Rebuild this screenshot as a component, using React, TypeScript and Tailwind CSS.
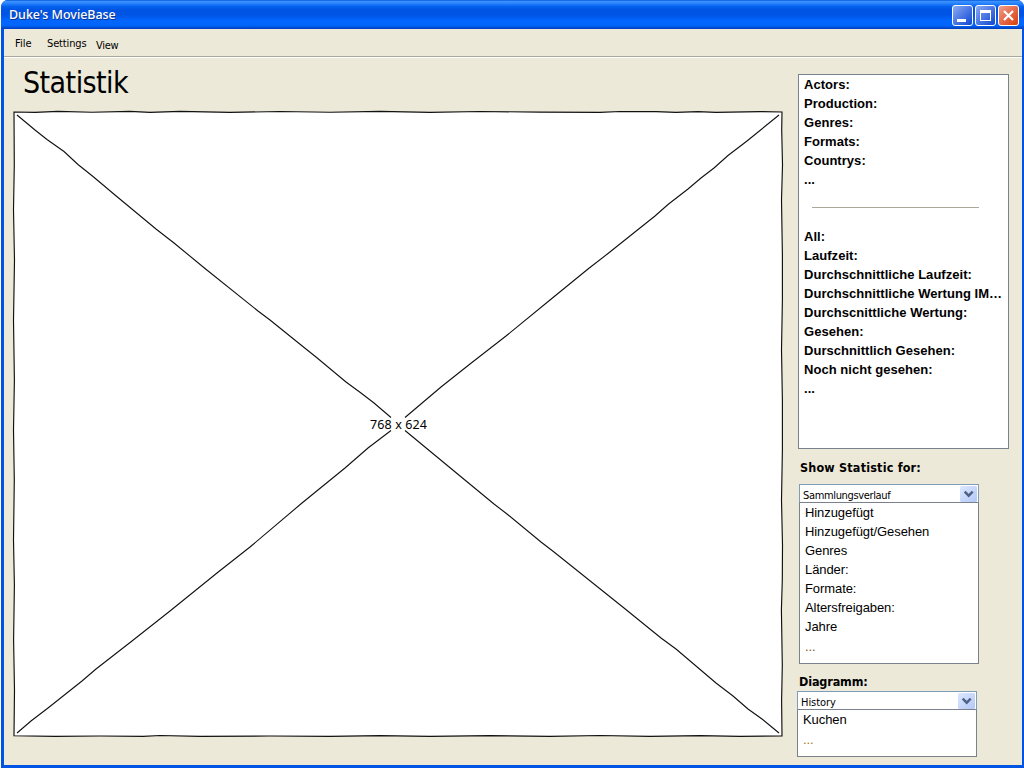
import React from "react";

const facts = [
  "Actors:",
  "Production:",
  "Genres:",
  "Formats:",
  "Countrys:",
  "...",
];

const totals = [
  "All:",
  "Laufzeit:",
  "Durchschnittliche Laufzeit:",
  "Durchschnittliche Wertung IM…",
  "Durchscnittliche Wertung:",
  "Gesehen:",
  "Durschnittlich Gesehen:",
  "Noch nicht gesehen:",
  "...",
];

const statistics = [
  "Hinzugefügt",
  "Hinzugefügt/Gesehen",
  "Genres",
  "Länder:",
  "Formate:",
  "Altersfreigaben:",
  "Jahre",
  "...",
];

const diagrams = ["Kuchen", "..."];

function WindowButton({ kind }: { kind: "min" | "max" | "close" }) {
  const close = kind === "close";
  return (
    <svg width="21" height="21" viewBox="0 0 21 21">
      <defs>
        <linearGradient id={`wb-${kind}`} x1="0" y1="0" x2="1" y2="1">
          <stop offset="0" stopColor={close ? "#f0a48c" : "#8eaef6"} />
          <stop offset="0.5" stopColor={close ? "#e5694a" : "#4c78e4"} />
          <stop offset="1" stopColor={close ? "#d93c08" : "#0b43cf"} />
        </linearGradient>
      </defs>
      <rect x="0.5" y="0.5" width="20" height="20" rx="2.5" fill={`url(#wb-${kind})`} stroke="#fff" />
      {kind === "min" && <rect x="5" y="14" width="9" height="3" fill="#fff" />}
      {kind === "max" && <path d="M5 5h11v11H5zM6 8v7h9V8z" fill="#fff" fillRule="evenodd" />}
      {close && <path d="M6 6l9 9M15 6l-9 9" stroke="#fff" strokeWidth="2.2" />}
    </svg>
  );
}

function Combo({ value, spacing }: { value: string; spacing: string }) {
  return (
    <div className="flex h-[19px] w-[180px] items-start justify-between border border-[#7f9db9] border-b-[#7a808c] bg-white pl-[3px] pr-px pt-px">
      <span className={`mt-[3px] whitespace-nowrap font-['DejaVu_Sans_Condensed','DejaVu_Sans',sans-serif] text-[11px] leading-[14px] font-stretch-condensed ${spacing}`}>
        {value}
      </span>
      <svg width="17" height="16" viewBox="0 0 17 16">
        <defs>
          <linearGradient id="combo-face" x1="0" y1="0" x2="1" y2="1">
            <stop offset="0" stopColor="#dde7fe" />
            <stop offset="1" stopColor="#b3c8f7" />
          </linearGradient>
        </defs>
        <rect width="17" height="16" rx="1.5" fill="url(#combo-face)" />
        <path d="M4.7 5.7l4 4 4-4" fill="none" stroke="#4d6185" strokeWidth="2.4" />
      </svg>
    </div>
  );
}

function Placeholder() {
  return (
    <svg className="block" width="772" height="628" viewBox="12 110 772 628">
      <path
        d="M14 112 L35 112.4 L58 111.4 L92 112.2 L130 111.4 L150 112.4 L180 111.4 L230 112.4 L280 111.5 L330 112.2 L380 111.4 L430 112.3 L480 111.5 L540 112.1 L600 112.3 L620 111.5 L656 111.6 L676 112.4 L698 111.6 L716 112.4 L760 111.6 L782 112 L781.7 130 L782.5 165 L781.5 200 L782.4 255 L782.4 300 L781.5 350 L782.4 400 L782.4 450 L781.5 500 L782.5 545 L782.3 580 L781.4 610 L782.3 665 L781.6 700 L782 736 L740 736.4 L700 735.6 L650 736.4 L600 735.5 L550 736.4 L490 735.6 L430 736.4 L380 735.6 L330 736.4 L270 736 L200 736.3 L160 735.5 L143 736.4 L100 736 L55 736.4 L14 735.7 L14.5 690 L13.6 640 L14.4 585 L13.5 540 L14.3 480 L13.5 430 L14.4 380 L13.5 320 L14.5 260 L13.5 210 L14.3 165 Z"
        fill="#fff"
        stroke="#111"
        strokeWidth="1.15"
      />
      <g fill="none" stroke="#111" strokeWidth="1.1">
        <path d="M17 115 L35 130 L47 139.5 L64 151.5 L78 164.5 L93 176.5 L115 195 L156 229 L174 243 L205 268.5 L258 311 L270 320 L301 345 L316 357 L346 382 L361 393 L374 403 L391 417.5" />
        <path d="M779 115 L747 141 L728 155.5 L714 168 L701 178 L688 189 L668 204.5 L655 216 L608 253.5 L588 269 L550 300 L506 336 L470 364 L441 387 L405 417.5" />
        <path d="M17 733 L31 721 L48 708 L82 681 L96 669 L132 641 L170 611 L217 573 L250 547 L302 503 L345 468 L368 448 L391 430.5" />
        <path d="M779 733 L762 719 L748 709 L733 696 L716 683 L676 649 L661 638 L624 608 L604 592 L554 552 L541 542 L507 514 L494 504 L454 471 L431 452 L405 430.5" />
      </g>
      <text x="370" y="429" textLength="57" fontSize="12.5" fontFamily="'Noto Sans',sans-serif">
        768 x 624
      </text>
    </svg>
  );
}

export default function App() {
  return (
    <div className="h-[768px] w-[1024px] overflow-hidden bg-white pl-px text-black">
      <div className="flex h-full flex-col overflow-hidden rounded-t-[7px] bg-[#0054e3]">
        <header className="flex h-[29px] shrink-0 items-start justify-between bg-[linear-gradient(180deg,#0655d8_0%,#3a93ff_5%,#2580fb_13%,#0360ee_23%,#0054e2_34%,#0055e6_52%,#0266ff_72%,#0265fa_88%,#0045cc_97%,#003cb8_100%)] pl-2 pr-[5px]">
          <span className="mt-[6px] whitespace-nowrap font-['Noto_Sans',sans-serif] text-[12.5px] font-medium leading-[17px] tracking-[-0.05px] text-white [text-shadow:1px_1px_0_#10368f]">
            Duke's MovieBase
          </span>
          <div className="mt-[5px] flex gap-[2px]">
            <WindowButton kind="min" />
            <WindowButton kind="max" />
            <WindowButton kind="close" />
          </div>
        </header>

        <div className="mb-[3px] ml-[3px] mr-[2px] flex min-h-0 flex-1 flex-col bg-[#ece9d8]">
          <nav className="flex h-[28px] shrink-0 items-start border-b border-[#aca899] pl-[11px] font-['DejaVu_Sans_Condensed','DejaVu_Sans',sans-serif] text-[11px] leading-[14px] font-stretch-condensed">
            <span className="mt-[8px] w-8 tracking-[0.05px]">File</span>
            <span className="mt-[8px] w-[49px] tracking-[-0.15px]">Settings</span>
            <span className="mt-[10px] tracking-[-0.3px]">View</span>
          </nav>
          <div className="h-px shrink-0 bg-white" />

          <div className="flex min-h-0 flex-1">
            <main className="w-[793px] shrink-0 pl-2">
              <h1 className="h-[52px] pl-[11px] pt-[6px] font-['DejaVu_Sans_Condensed','DejaVu_Sans',sans-serif] text-[30px] leading-[37px] tracking-[-0.55px] font-stretch-condensed">
                Statistik
              </h1>
              <Placeholder />
            </main>

            <aside className="flex flex-col pt-4">
              <section className="ml-px h-[375px] w-[211px] border border-[#7a808c] bg-white pl-[5px] font-['Liberation_Sans',Arial,sans-serif] text-[13px] font-bold leading-[19px] tracking-[0.04px]">
                {facts.map((t) => (
                  <p key={t} className="whitespace-nowrap">{t}</p>
                ))}
                <div className="flex h-[38px] items-start pl-2 pt-[18px]">
                  <div className="h-px w-[167px] bg-[#aca899]" />
                </div>
                {totals.map((t) => (
                  <p key={t} className="whitespace-nowrap">{t}</p>
                ))}
              </section>

              <h2 className="ml-[3px] mt-[10px] h-[25px] font-['DejaVu_Sans_Condensed','DejaVu_Sans',sans-serif] text-[12.5px] font-bold leading-[18px] tracking-[0.18px] font-stretch-condensed">
                Show Statistic for:
              </h2>
              <div className="ml-[2px]">
                <Combo value="Sammlungsverlauf" spacing="tracking-[-0.35px]" />
                <ul className="h-[161px] w-[180px] border border-t-0 border-[#7a808c] bg-white pl-[5px] font-['Liberation_Sans',Arial,sans-serif] text-[13px] leading-[19px] tracking-[-0.08px]">
                  {statistics.map((t) => (
                    <li key={t} className={t === "..." ? "pt-px text-[#77520f]" : ""}>{t}</li>
                  ))}
                </ul>
              </div>

              <h2 className="ml-[2px] mt-[9px] h-[18px] font-['DejaVu_Sans_Condensed','DejaVu_Sans',sans-serif] text-[12.5px] font-bold leading-[18px] tracking-[-0.15px] font-stretch-condensed">
                Diagramm:
              </h2>
              <Combo value="History" spacing="tracking-[-0.05px]" />
              <ul className="h-[47px] w-[180px] border border-t-0 border-[#7a808c] bg-white pl-[5px] font-['Liberation_Sans',Arial,sans-serif] text-[13px] leading-[19px] tracking-[-0.08px]">
                {diagrams.map((t) => (
                  <li key={t} className={t === "..." ? "pt-px text-[#a8741b]" : ""}>{t}</li>
                ))}
              </ul>
            </aside>
          </div>
        </div>
      </div>
    </div>
  );
}
